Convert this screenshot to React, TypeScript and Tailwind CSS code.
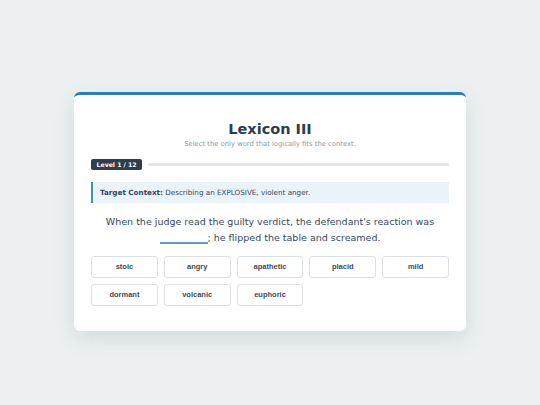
const WORDS = ['stoic', 'angry', 'apathetic', 'placid', 'mild', 'dormant', 'volcanic', 'euphoric'];

export default function App() {
  return (
    <div
      className="flex h-[405px] w-full items-center justify-center bg-[#ecf0f1] pt-[17px]"
      style={{ fontFamily: '"DejaVu Sans", Verdana, sans-serif' }}
    >
      <div className="w-[392px] rounded-[6px] border-t-[3px] border-[#2980b9] bg-white px-[17px] pb-[25px] pt-[26px] shadow-[0_8px_22px_rgba(44,62,80,0.12)]">
        <h1 className="text-center text-[14.5px] font-bold leading-[17px] text-[#2c3e50]">Lexicon III</h1>
        <p className="mt-[2px] text-center text-[6.8px] leading-[8px] text-[#8e9a9d]">
          Select the only word that logically fits the context.
        </p>

        <div className="mt-[11px] flex items-center gap-[6px]">
          <span className="rounded-[2px] bg-[#2c3e50] px-[5.5px] text-[6.2px] font-bold leading-[11px] text-white">
            Level 1 / 12
          </span>
          <div className="h-[3px] flex-1 rounded-full bg-[#e1e7e9]">
            <div className="h-full w-0 rounded-full bg-[#2980b9]" />
          </div>
        </div>

        <div className="mt-[12px] border-l-2 border-[#3a8fc8] bg-[#eaf2fa] px-[7px] text-[7.2px] leading-[21px] text-[#34495e]">
          <strong className="font-bold">Target Context:</strong> Describing an EXPLOSIVE, violent anger.
        </div>

        <p className="mt-[11px] text-center text-[9.5px] leading-[16px] text-[#34495e]">
          When the judge read the guilty verdict, the defendant's reaction was{' '}
          <span className="inline-block w-[48px] border-b-2 border-[#5b9bc8] leading-none">&nbsp;</span>; he flipped the
          table and screamed.
        </p>

        <div className="mt-[10px] grid grid-cols-5 gap-[6px]">
          {WORDS.map((w) => (
            <button
              key={w}
              className="h-[22px] rounded-[3px] border border-[#dcdfe3] bg-white text-[7.5px] font-bold text-[#3d4a5a]"
              style={{ fontFamily: '"Liberation Sans", Arial, sans-serif' }}
            >
              {w}
            </button>
          ))}
        </div>
      </div>
    </div>
  );
}
